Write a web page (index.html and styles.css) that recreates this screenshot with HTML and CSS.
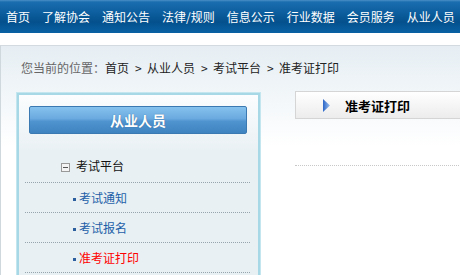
FILE: index.html
```html
<!DOCTYPE html>
<html lang="zh-CN">
<head>
    <meta charset="UTF-8">
    <title>准考证打印</title>
    <link rel="stylesheet" href="styles.css">
</head>
<body>
    <!-- 顶部导航 -->
    <div class="nav">
        <a href="#">首页</a>
        <a href="#">了解协会</a>
        <a href="#">通知公告</a>
        <a href="#">法律/规则</a>
        <a href="#">信息公示</a>
        <a href="#">行业数据</a>
        <a href="#">会员服务</a>
        <a href="#">从业人员</a>
    </div>

    <div class="page">
        <div class="crumb">
            <span class="crumb-label">您当前的位置：</span><a href="#">首页</a><span class="sep">&gt;</span><a href="#">从业人员</a><span class="sep">&gt;</span><a href="#">考试平台</a><span class="sep">&gt;</span><a href="#">准考证打印</a>
        </div>

        <div class="content">
            <!-- 左侧菜单 -->
            <div class="sidebar">
                <div class="side-head">
                    <div class="side-title">从业人员</div>
                </div>
                <ul class="side-menu">
                    <li class="side-group"><span class="toggle"></span>考试平台</li>
                    <li><a href="#">考试通知</a></li>
                    <li><a href="#">考试报名</a></li>
                    <li class="current"><a href="#">准考证打印</a></li>
                </ul>
            </div>

            <!-- 正文 -->
            <div class="main">
                <div class="main-title">
                    <svg class="arrow" width="7" height="13" viewBox="0 0 7 13">
                        <defs>
                            <linearGradient id="arrowFill" x1="0" y1="0" x2="1" y2="0">
                                <stop offset="0" stop-color="#2c66c8"/>
                                <stop offset="1" stop-color="#9dc0ee"/>
                            </linearGradient>
                        </defs>
                        <polygon points="0,0 7,6.5 0,13" fill="url(#arrowFill)"/>
                    </svg>
                    <span>准考证打印</span>
                </div>
                <div class="main-body"></div>
            </div>
        </div>
    </div>
</body>
</html>
```

FILE: styles.css
```css
* {
    box-sizing: border-box;
}

body {
    margin: 0;
    font-family: "Noto Sans CJK SC", "Liberation Sans", sans-serif;
    font-size: 12px;
    color: #222;
    background-color: #fff;
    overflow: hidden;
}

a {
    text-decoration: none;
    color: inherit;
}

/* 顶部导航 */
.nav {
    display: flex;
    height: 33px;
    padding-left: 6px;
    white-space: nowrap;
    background: linear-gradient(to bottom, #4a8fc6 0, #1a6dae 2px, #0d5f9f 12px, #04508d 22px, #0962a4 33px);
}

.nav a {
    margin-right: 12px;
    line-height: 33px;
    color: #fff;
}

/* 当前位置 */
.page {
    margin-top: 12px;
    min-height: 300px;
    border-top: 1px solid #d3dbe0;
    border-left: 1px solid #cfd8dd;
    background: linear-gradient(to bottom, #e6eef3 0, #edf3f7 30px, #fff 100px);
}

.crumb {
    height: 46px;
    padding: 15px 0 0 20px;
    line-height: 14px;
    white-space: nowrap;
    color: #222;
}

.crumb-label {
    color: #666;
}

.sep {
    display: inline-block;
    width: 6px;
    margin: 0 6px;
    text-align: center;
}

.content {
    display: flex;
    padding-left: 15px;
}

/* 左侧菜单 */
.sidebar {
    flex: none;
    width: 245px;
    border: 1px solid #c4e6ee;
    box-shadow: inset 0 0 0 2px #a6d9e5;
    padding: 2px;
    background-color: #e8f0f3;
}

.side-head {
    height: 55px;
    padding: 11px 0 0 10px;
    background: linear-gradient(to bottom, #fbfdfe, #eaf1f4);
}

.side-title {
    width: 218px;
    height: 28px;
    line-height: 26px;
    text-align: center;
    font-size: 14px;
    font-weight: bold;
    color: #fff;
    border: 1px solid #3b79b2;
    border-radius: 2px;
    background: linear-gradient(to bottom, #86c2ee 0, #6aa9df 45%, #4f93cf 55%, #3f83c0 100%);
    text-shadow: 0 0 1px #2a5f90;
}

.side-menu {
    list-style: none;
    margin: 0;
    padding: 0 8px 20px 6px;
}

.side-menu li {
    height: 30px;
    line-height: 29px;
    padding-left: 48px;
    border-bottom: 1px dotted #98a4ab;
}

.side-menu li a {
    color: #1d5fa8;
}

.side-menu li a::before {
    content: "";
    display: inline-block;
    width: 3px;
    height: 3px;
    margin-right: 3px;
    vertical-align: middle;
    background-color: #2c5f9e;
}

.side-menu li.current a {
    color: #ff0000;
}

.side-menu .side-group {
    height: 33px;
    line-height: 32px;
    padding-left: 36px;
    color: #111;
    font-size: 12px;
}

.toggle {
    display: inline-block;
    position: relative;
    width: 9px;
    height: 9px;
    margin-right: 6px;
    vertical-align: -1px;
    border: 1px solid #999;
    background-color: #f4f4f4;
}

.toggle::after {
    content: "";
    position: absolute;
    left: 1px;
    top: 3px;
    width: 5px;
    height: 1px;
    background-color: #555;
}

/* 正文 */
.main {
    flex: none;
    width: 520px;
    margin-left: 34px;
}

.main-title {
    display: flex;
    align-items: center;
    height: 28px;
    margin-top: -1px;
    padding-left: 27px;
    border: 1px solid #d5d5d5;
    background: linear-gradient(to bottom, #fff, #ececec);
}

.arrow {
    display: block;
    margin-right: 15px;
}

.main-title span {
    font-size: 13px;
    font-weight: bold;
    color: #000;
}

.main-body {
    height: 47px;
    border-bottom: 1px dotted #c8c8c8;
}
```
